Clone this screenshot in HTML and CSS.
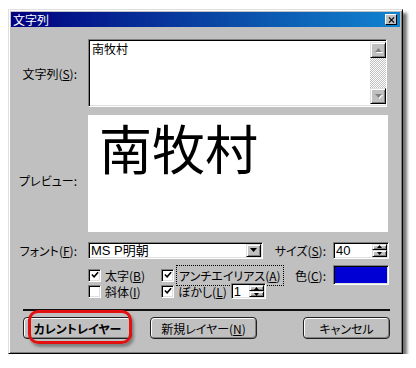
FILE: index.html
```html
<!DOCTYPE html>
<html lang="ja">
<head>
  <meta charset="UTF-8" />
  <title>文字列</title>
  <link rel="stylesheet" href="styles.css">
</head>
<body>

  <div class="window">
    <!-- Title bar -->
    <div class="titlebar">
      <span class="title">文字列</span>
      <span class="close-btn">
        <svg viewBox="0 0 8 7" aria-hidden="true"><path d="M1 0.5l6 6M7 0.5l-6 6" /></svg>
      </span>
    </div>

    <div class="dialog-body">
      <!-- Text input -->
      <div class="row row-text">
        <div class="label">文字列(<u>S</u>):</div>
        <div class="textbox sunken">
          <div class="textbox-text">南牧村</div>
          <div class="scrollbar">
            <div class="sb-btn raised">
              <svg viewBox="0 0 7 4" aria-hidden="true"><path d="M3.5 0L7 4H0z" /></svg>
            </div>
            <div class="sb-track"></div>
            <div class="sb-btn raised">
              <svg viewBox="0 0 7 4" aria-hidden="true"><path d="M0 0h7L3.5 4z" /></svg>
            </div>
          </div>
        </div>
      </div>

      <!-- Preview -->
      <div class="row row-preview">
        <div class="label label-preview">プレビュー:</div>
        <div class="preview">南牧村</div>
      </div>

      <!-- Font + size -->
      <div class="row row-font">
        <div class="label">フォント(<u>F</u>):</div>
        <div class="font-fields">
          <div class="select sunken">
            <span class="select-text">MS P明朝</span>
            <span class="drop-btn raised">
              <svg viewBox="0 0 7 4" aria-hidden="true"><path d="M0 0h7L3.5 4z" /></svg>
            </span>
          </div>
          <div class="inline-label">サイズ(<u>S</u>):</div>
          <div class="spin spin-size sunken">
            <span class="spin-text">40</span>
            <span class="spin-btns">
              <span class="spin-btn raised"><svg viewBox="0 0 5 3"><path d="M2.5 0L5 3H0z" /></svg></span>
              <span class="spin-btn raised"><svg viewBox="0 0 5 3"><path d="M0 0h5L2.5 3z" /></svg></span>
            </span>
          </div>
        </div>
      </div>

      <!-- Checkboxes -->
      <div class="checks">
        <div class="check">
          <span class="box sunken checked"><svg viewBox="0 0 9 9"><path d="M1 4l2.5 2.5L8 1.5" /></svg></span>
          <span>太字(<u>B</u>)</span>
        </div>
        <div class="check">
          <span class="box sunken checked"><svg viewBox="0 0 9 9"><path d="M1 4l2.5 2.5L8 1.5" /></svg></span>
          <span class="focus">アンチエイリアス(<u>A</u>)</span>
        </div>
        <div class="inline-label color-label">色(<u>C</u>):</div>
        <div class="swatch sunken"></div>

        <div class="check">
          <span class="box sunken"></span>
          <span>斜体(<u>I</u>)</span>
        </div>
        <div class="check">
          <span class="box sunken checked"><svg viewBox="0 0 9 9"><path d="M1 4l2.5 2.5L8 1.5" /></svg></span>
          <span>ぼかし(<u>L</u>)</span>
          <div class="spin spin-blur sunken">
            <span class="spin-text">1</span>
            <span class="spin-btns">
              <span class="spin-btn raised"><svg viewBox="0 0 5 3"><path d="M2.5 0L5 3H0z" /></svg></span>
              <span class="spin-btn raised"><svg viewBox="0 0 5 3"><path d="M0 0h5L2.5 3z" /></svg></span>
            </span>
          </div>
        </div>
      </div>

      <div class="separator"></div>

      <!-- Buttons -->
      <div class="buttons">
        <div class="btn btn-current">カレントレイヤー</div>
        <div class="btn btn-new">新規レイヤー(<u>N</u>)</div>
        <div class="btn btn-cancel">キャンセル</div>
      </div>
    </div>

    <!-- red annotation ring -->
    <div class="highlight"></div>
  </div>

</body>
</html>
```

FILE: styles.css
```css
body {
  margin: 0;
  background: #ffffff;
  font-family: "Noto Sans CJK JP", "Liberation Sans", sans-serif;
  font-size: 12px;
  font-feature-settings: "palt";
  color: #000;
}

.window {
  position: relative;
  margin: 9px 0 0 8px;
  width: 389px;
  background: #c0c0c0;
  border: 1px solid;
  border-color: #dfdfdf #000 #000 #dfdfdf;
  box-shadow: inset 1px 1px #fff, inset -1px -1px #808080, 4px 4px 3px rgba(0, 0, 0, 0.55);
  padding: 2px;
}

.titlebar {
  height: 15px;
  display: flex;
  align-items: center;
  justify-content: space-between;
  padding: 0 3px 0 2px;
  background: linear-gradient(90deg, #000080, #0a4aa6 55%, #1084d0);
}

.title {
  color: #fff;
  font-size: 12px;
  line-height: 15px;
  font-feature-settings: normal;
}

.close-btn {
  width: 10px;
  height: 9px;
  background: #c0c0c0;
  border: 1px solid;
  border-color: #fff #000 #000 #fff;
  display: flex;
  align-items: center;
  justify-content: center;
}

.close-btn svg {
  width: 7px;
  height: 6px;
  stroke: #000;
  stroke-width: 1.4;
}

.sunken {
  border: 1px solid;
  border-color: #808080 #fff #fff #808080;
  box-shadow: inset 1px 1px #000, inset -1px -1px #dfdfdf;
  background: #fff;
}

.raised {
  background: #c0c0c0;
  border: 1px solid;
  border-color: #dfdfdf #000 #000 #dfdfdf;
  box-shadow: inset 1px 1px #fff, inset -1px -1px #808080;
  box-sizing: border-box;
}

.dialog-body {
  padding: 12px 10px 12px 0;
}

.row {
  display: flex;
}

.label {
  width: 77px;
  flex: none;
  box-sizing: border-box;
  padding-right: 11px;
  text-align: right;
  white-space: nowrap;
}

/* text input */
.row-text {
  align-items: center;
  height: 68px;
}

.textbox {
  width: 299px;
  height: 68px;
  box-sizing: border-box;
  display: flex;
}

.textbox-text {
  flex: 1;
  padding: 2px 3px;
  line-height: 14px;
  font-feature-settings: normal;
}

.scrollbar {
  width: 16px;
  margin: 2px 0;
  display: flex;
  flex-direction: column;
}

.sb-btn {
  height: 16px;
  display: flex;
  align-items: center;
  justify-content: center;
}

.sb-btn svg {
  width: 7px;
  height: 4px;
  fill: #808080;
  filter: drop-shadow(1px 1px 0 #fff);
}

.sb-track {
  flex: 1;
  background-color: #fff;
  background-image: conic-gradient(#c0c0c0 25%, #fff 0 50%, #c0c0c0 0 75%, #fff 0);
  background-size: 2px 2px;
}

/* preview */
.row-preview {
  margin-top: 8px;
  align-items: center;
}

.label-preview {
  padding-top: 14px;
}

.preview {
  width: 300px;
  height: 117px;
  background: #fff;
  box-sizing: border-box;
  padding: 6px 0 0 11px;
  font-size: 53px;
  line-height: 1;
  font-feature-settings: normal;
}

/* font row */
.row-font {
  margin-top: 10px;
  align-items: center;
  height: 16px;
}

.font-fields {
  display: flex;
  align-items: center;
  width: 301px;
}

.select {
  width: 175px;
  height: 17px;
  box-sizing: border-box;
  display: flex;
  align-items: stretch;
}

.select-text {
  flex: 1;
  padding-left: 2px;
  line-height: 15px;
  font-family: "Liberation Sans", "Noto Sans CJK JP", sans-serif;
  font-size: 13px;
}

.drop-btn {
  width: 15px;
  margin: 1px;
  display: flex;
  align-items: center;
  justify-content: center;
}

.drop-btn svg {
  width: 7px;
  height: 4px;
  fill: #000;
}

.inline-label {
  white-space: nowrap;
  margin-left: auto;
  margin-right: 7px;
}

.spin {
  box-sizing: border-box;
  display: flex;
}

.spin-size {
  width: 56px;
  height: 17px;
}

.spin-text {
  flex: 1;
  padding-left: 2px;
  line-height: 15px;
  font-family: "Liberation Sans", sans-serif;
  font-size: 13px;
}

.spin-btns {
  width: 15px;
  margin: 1px 1px 1px 0;
  display: flex;
  flex-direction: column;
}

.spin-btn {
  flex: 1;
  display: flex;
  align-items: center;
  justify-content: center;
}

.spin-btn svg {
  width: 5px;
  height: 3px;
  fill: #000;
}

/* checkboxes */
.checks {
  margin: 9px 0 0 77px;
  width: 301px;
  display: grid;
  grid-template-columns: 73px 1fr auto 56px;
  grid-template-rows: 16px 16px;
  align-items: center;
}

.check {
  display: flex;
  align-items: center;
  gap: 4px;
  white-space: nowrap;
}

.box {
  width: 13px;
  height: 13px;
  box-sizing: border-box;
  display: flex;
  align-items: center;
  justify-content: center;
}

.box svg {
  width: 8px;
  height: 8px;
  fill: none;
  stroke: #000;
  stroke-width: 1.8;
}

.focus {
  outline: 1px dotted #000;
  outline-offset: 1px;
  padding: 0 1px;
}

.color-label {
  margin-right: 7px;
}

.swatch {
  grid-column: 4;
  grid-row: 1;
  align-self: start;
  margin-top: -2px;
  height: 20px;
  box-sizing: border-box;
  background: #0000d4;
}

.spin-blur {
  width: 35px;
  height: 16px;
  margin-left: 0;
}

.separator {
  margin: 10px 0 0 12px;
  height: 2px;
  background: #101010;
}

/* buttons */
.buttons {
  display: flex;
  margin: 6px 0 0 12px;
}

.btn {
  height: 22px;
  box-sizing: border-box;
  border: 1px solid #202020;
  border-radius: 4px;
  background: #c0c0c0;
  box-shadow: inset 1px 1px #fff, inset -1px -1px #808080;
  display: flex;
  align-items: center;
  justify-content: center;
  white-space: nowrap;
}

.btn-current {
  width: 109px;
  font-weight: bold;
}

.btn-new {
  width: 107px;
  margin-left: 18px;
}

.btn-cancel {
  width: 87px;
  margin-left: auto;
}

.highlight {
  position: absolute;
  left: 19px;
  top: 300px;
  width: 104px;
  height: 34px;
  box-sizing: border-box;
  border: 3px solid #e41010;
  border-radius: 10px;
  box-shadow: 2px 3px 3px rgba(0, 0, 0, 0.35);
}
```
